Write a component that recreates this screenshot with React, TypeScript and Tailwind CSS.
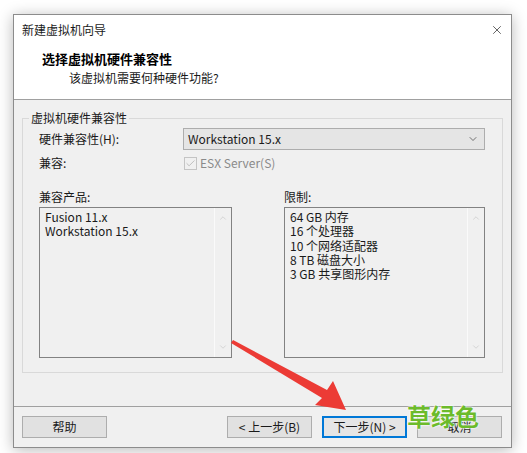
import { Check, ChevronDown, ChevronUp, X } from 'lucide-react'

const ui = 'font-["Noto_Sans_CJK_SC","Noto_Sans",sans-serif]'

const products = ['Fusion 11.x', 'Workstation 15.x']
const limits = ['64 GB 内存', '16 个处理器', '10 个网络适配器', '8 TB 磁盘大小', '3 GB 共享图形内存']

function ListBox({ items, width }: { items: string[]; width: string }) {
  return (
    <div className={`${width} h-[151px] border border-[#828282] bg-[#f0f0f0] flex`}>
      <div className="flex-1 pl-[5px] pt-[2px] text-[12px] leading-[14.3px] text-[#1a1a1a]">
        {items.map((item) => (
          <div key={item}>{item}</div>
        ))}
      </div>
      <div className="w-[17px] border-l border-[#fafafa] flex flex-col items-center justify-between py-[5px] text-[#c4c4c4]">
        <ChevronUp size={10} strokeWidth={1.5} />
        <ChevronDown size={10} strokeWidth={1.5} />
      </div>
    </div>
  )
}

function Button({ label, focused }: { label: string; focused?: boolean }) {
  return (
    <div
      className={`w-[85px] h-[22px] flex items-center justify-center text-[12px] text-[#1a1a1a] ${
        focused ? 'border-2 border-[#0078d7] bg-[#e5e5e5]' : 'border border-[#adadad] bg-[#e1e1e1]'
      }`}
    >
      {label}
    </div>
  )
}

export default function App() {
  return (
    <div className={`relative w-[527px] h-[453px] bg-white pl-[13px] pt-[14px] ${ui}`}>
      <div className="w-[499px] h-[434px] border border-[#8c8c8c] shadow-[0_2px_14px_rgba(0,0,0,0.28)] flex flex-col">
        {/* title bar + wizard header */}
        <div className="h-[85px] bg-white border-b border-[#a0a0a0] shrink-0">
          <div className="h-[29px] flex items-center justify-between pl-[8px] pr-[7px]">
            <span className="text-[12px] text-[#1a1a1a]">新建虚拟机向导</span>
            <X size={14} strokeWidth={1.2} className="text-[#222]" />
          </div>
          <div className="pl-[28px] mt-[7px] text-[13px] leading-[16px] font-bold text-black">
            选择虚拟机硬件兼容性
          </div>
          <div className="pl-[55px] mt-[3px] text-[12px] leading-[16px] text-[#1a1a1a]">
            该虚拟机需要何种硬件功能?
          </div>
        </div>

        {/* page body */}
        <div className="flex-1 bg-[#f0f0f0] flex flex-col">
          <div className="relative mt-[18px] ml-[8px] w-[481px] h-[255px] border border-[#d9d9d9] pl-[16px] pr-[17px] text-[12px] text-[#1a1a1a]">
            <span className="absolute -top-[9px] left-[6px] px-[2px] bg-[#f0f0f0] leading-[16px]">
              虚拟机硬件兼容性
            </span>

            <div className="mt-[9px] flex items-center">
              <span className="w-[144px]">硬件兼容性(H):</span>
              <div className="flex-1 h-[22px] border border-[#adadad] bg-[#e5e5e5] flex items-center justify-between pl-[4px] pr-[5px]">
                <span>Workstation 15.x</span>
                <ChevronDown size={12} strokeWidth={1.3} className="text-[#333]" />
              </div>
            </div>

            <div className="mt-[5px] h-[16px] flex items-center">
              <span className="w-[145px]">兼容:</span>
              <div className="w-[13px] h-[13px] border border-[#c4c4c4] bg-[#f0f0f0] flex items-center justify-center">
                <Check size={11} strokeWidth={1.5} className="text-[#a8a8a8]" />
              </div>
              <span className="ml-[3px] text-[#8a8a8a]">ESX Server(S)</span>
            </div>

            <div className="mt-[18px] h-[16px] flex items-center">
              <span className="w-[245px]">兼容产品:</span>
              <span>限制:</span>
            </div>

            <div className="mt-[2px] flex justify-between">
              <ListBox items={products} width="w-[193px]" />
              <ListBox items={limits} width="w-[201px]" />
            </div>
          </div>

          <div className="mt-[33px] border-t border-[#a0a0a0]" />

          <div className="mt-[9px] flex pl-[8px]">
            <Button label="帮助" />
            <div className="ml-auto mr-[9px] flex gap-[10px]">
              <Button label="< 上一步(B)" />
              <Button label="下一步(N) >" focused />
              <Button label="取消" />
            </div>
          </div>
        </div>
      </div>

      {/* red pointer arrow */}
      <svg className="absolute left-0 top-0" width="527" height="453" viewBox="0 0 527 453">
        <polygon
          points="233,340 327,390 333,381 346,410 315,405 322,398 231,343"
          fill="#ec3b35"
        />
      </svg>

      <span className="absolute left-[407px] top-[401px] text-[24px] leading-[30px] font-bold text-[#6cbb2b] [text-shadow:0_0_2px_#fff,0_0_2px_#fff]">
        草绿色
      </span>
    </div>
  )
}
